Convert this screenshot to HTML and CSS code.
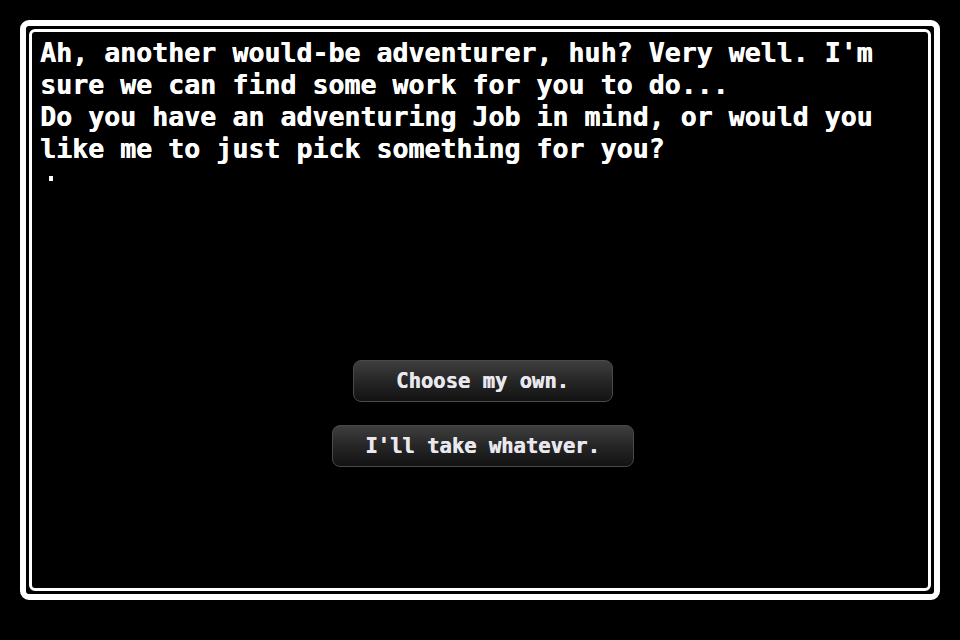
FILE: index.html
```html
<!DOCTYPE html>
<html lang="en">
<head>
<meta charset="utf-8">
<title>Guild Hall</title>
<link rel="stylesheet" href="styles.css">
</head>
<body>
  <div class="frame">
    <div class="panel">
      <div class="dialogue">
        <p class="line">Ah, another would-be adventurer, huh? Very well. I'm</p>
        <p class="line">sure we can find some work for you to do...</p>
        <p class="line">Do you have an adventuring Job in mind, or would you</p>
        <p class="line">like me to just pick something for you?</p>
      </div>
      <div class="cursor"></div>
      <div class="choices">
        <button class="choice choice-own" type="button">Choose my own.</button>
        <button class="choice choice-any" type="button">I'll take whatever.</button>
      </div>
    </div>
  </div>
</body>
</html>
```
FILE: styles.css
```css
html, body {
  margin: 0;
  padding: 0;
  background: #000;
}

body {
  width: 960px;
  height: 640px;
  overflow: hidden;
  font-family: "DejaVu Sans Mono", "Liberation Mono", monospace;
  font-weight: bold;
  color: #fff;
}

/* double white window border */
.frame {
  margin: 20px;
  height: 580px;
  box-sizing: border-box;
  border: 6px solid #fff;
  border-radius: 9px;
  padding: 3px;
  background: #000;
}

.panel {
  height: 100%;
  box-sizing: border-box;
  border: 3px solid #fff;
  border-radius: 6px;
  padding: 5px 8px 0 8px;
  display: flex;
  flex-direction: column;
}

.dialogue {
  font-size: 26.6px;
  line-height: 32px;
  text-shadow: 0.5px 0 0 #fff;
}

.line {
  margin: 0;
  white-space: pre;
}

.cursor {
  width: 4px;
  height: 5px;
  margin: 11px 0 0 9px;
  background: #fff;
}

.choices {
  margin-top: 179px;
  padding-left: 5px;
  display: flex;
  flex-direction: column;
  align-items: center;
  gap: 23px;
}

.choice {
  height: 42px;
  box-sizing: border-box;
  border: 1px solid #4a4a4a;
  border-radius: 8px;
  background: linear-gradient(to bottom, #3e3e3e 0%, #262626 50%, #121212 100%);
  color: #e8e8ee;
  font-family: "DejaVu Sans Mono", "Liberation Mono", monospace;
  font-weight: bold;
  font-size: 20.5px;
  line-height: 38px;
  padding: 0;
  text-align: center;
  text-shadow: 0.5px 0 0 #e8e8ee;
  cursor: pointer;
}

.choice-own {
  width: 260px;
}

.choice-any {
  width: 302px;
}
```
